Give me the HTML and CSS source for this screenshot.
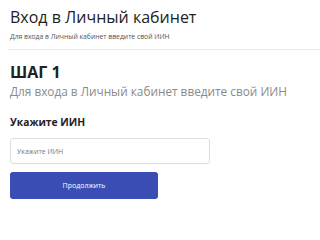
FILE: index.html
```html
<!DOCTYPE html>
<html lang="ru">
<head>
<meta charset="utf-8">
<link rel="stylesheet" href="styles.css">
</head>
<body>
<div class="page">
  <header class="head">
    <h1 class="title">Вход в Личный кабинет</h1>
    <p class="subtitle">Для входа в Личный кабинет введите свой ИИН</p>
  </header>
  <hr class="divider">
  <section class="step">
    <h2 class="step-title">ШАГ 1</h2>
    <p class="step-desc">Для входа в Личный кабинет введите свой ИИН</p>
    <label class="label" for="iin">Укажите ИИН</label>
    <input class="input" id="iin" type="text" placeholder="Укажите ИИН">
    <button class="btn" type="button">Продолжить</button>
  </section>
</div>
</body>
</html>
```
FILE: styles.css
```css
html, body {
  margin: 0;
  padding: 0;
  background: #ffffff;
}
body {
  font-family: "Open Sans", "Noto Sans", sans-serif;
  color: #212529;
  overflow: hidden;
}
.page {
  padding: 0 0 0 10px;
}
.head {
  padding-top: 6px;
}
.title {
  margin: 0;
  font-size: 16px;
  font-weight: 400;
  line-height: 22px;
  color: #222;
}
.subtitle {
  margin: 5px 0 0;
  font-size: 6.8px;
  line-height: 8px;
  color: #555;
}
.divider {
  margin: 8px 0 0 -2px;
  border: 0;
  border-top: 1px solid #e8e8e8;
  height: 0;
}
.step {
  display: flex;
  flex-direction: column;
  align-items: flex-start;
}
.step-title {
  margin: 12px 0 0;
  font-size: 16px;
  font-weight: 700;
  line-height: 20px;
  color: #212121;
}
.step-desc {
  margin: 1px 0 0;
  font-size: 11.8px;
  line-height: 16px;
  color: #8a8a8a;
}
.label {
  margin-top: 17px;
  font-size: 10.3px;
  font-weight: 700;
  line-height: 13px;
  color: #222;
}
.input {
  margin-top: 9px;
  box-sizing: border-box;
  width: 200px;
  height: 26px;
  padding: 0 6px;
  border: 1px solid #dedede;
  border-radius: 3px;
  font-family: inherit;
  font-size: 7px;
  color: #333;
  outline: none;
}
.input::placeholder {
  color: #777;
}
.btn {
  margin-top: 8px;
  width: 148px;
  height: 27px;
  border: 0;
  border-radius: 3px;
  background: #3a4db5;
  color: #fff;
  font-family: inherit;
  font-size: 7px;
}
```
